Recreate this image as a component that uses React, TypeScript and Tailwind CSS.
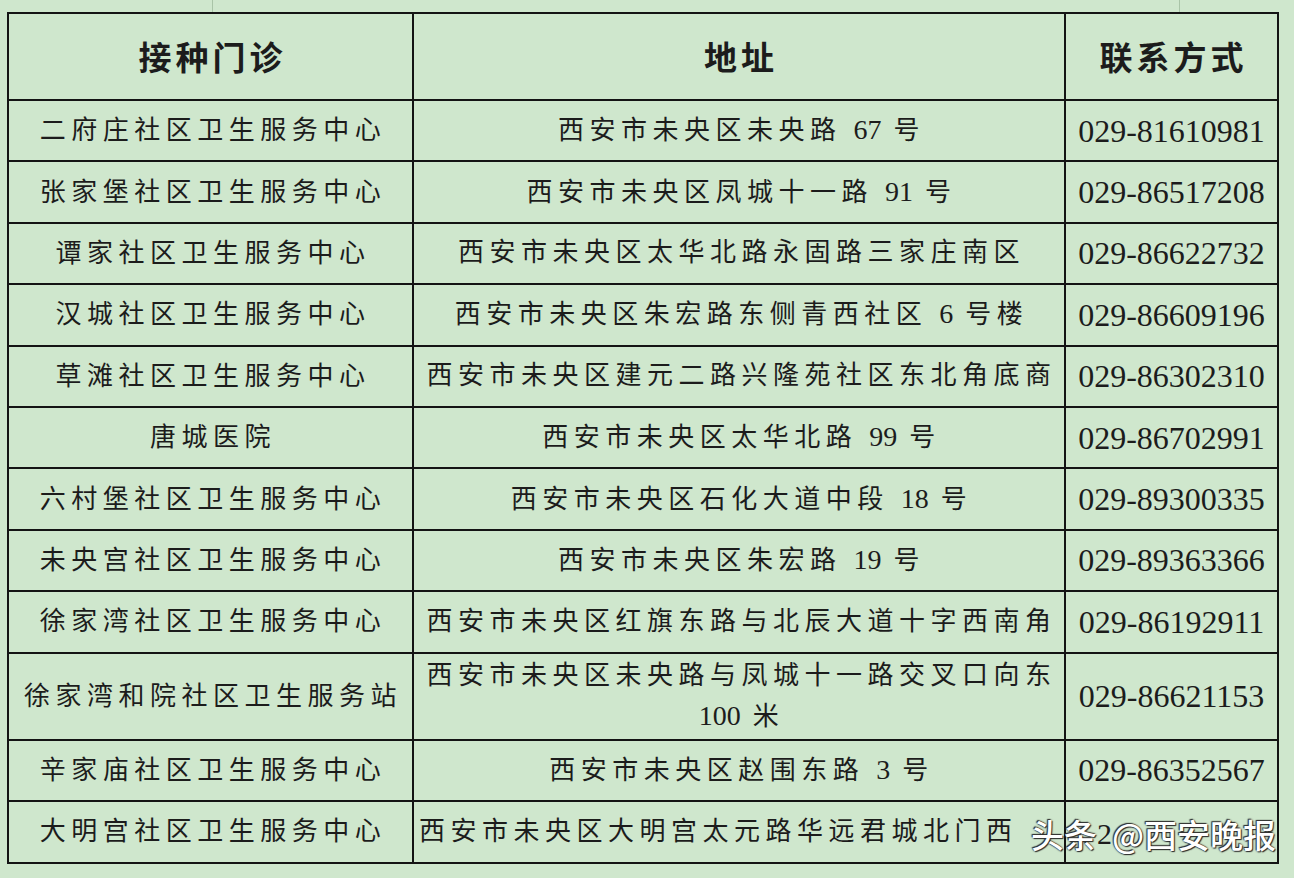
import React from "react"

type Row = {
  clinic: string
  address: string
  phone: string
  tall?: boolean
}

const rows: Row[] = [
  { clinic: "二府庄社区卫生服务中心", address: "西安市未央区未央路 67 号", phone: "029-81610981" },
  { clinic: "张家堡社区卫生服务中心", address: "西安市未央区凤城十一路 91 号", phone: "029-86517208" },
  { clinic: "谭家社区卫生服务中心", address: "西安市未央区太华北路永固路三家庄南区", phone: "029-86622732" },
  { clinic: "汉城社区卫生服务中心", address: "西安市未央区朱宏路东侧青西社区 6 号楼", phone: "029-86609196" },
  { clinic: "草滩社区卫生服务中心", address: "西安市未央区建元二路兴隆苑社区东北角底商", phone: "029-86302310" },
  { clinic: "唐城医院", address: "西安市未央区太华北路 99 号", phone: "029-86702991" },
  { clinic: "六村堡社区卫生服务中心", address: "西安市未央区石化大道中段 18 号", phone: "029-89300335" },
  { clinic: "未央宫社区卫生服务中心", address: "西安市未央区朱宏路 19 号", phone: "029-89363366" },
  { clinic: "徐家湾社区卫生服务中心", address: "西安市未央区红旗东路与北辰大道十字西南角", phone: "029-86192911" },
  {
    clinic: "徐家湾和院社区卫生服务站",
    address: "西安市未央区未央路与凤城十一路交叉口向东\n100 米",
    phone: "029-86621153",
    tall: true,
  },
  { clinic: "辛家庙社区卫生服务中心", address: "西安市未央区赵围东路 3 号", phone: "029-86352567" },
  { clinic: "大明宫社区卫生服务中心", address: "西安市未央区大明宫太元路华远君城北门西", phone: "" },
]

// digits in the addresses are set tight, the Chinese text is spaced out
function renderAddress(text: string) {
  return text.split("\n").map((line, li) => (
    <React.Fragment key={li}>
      {li > 0 && <br />}
      {line.split(/(\d+)/).map((part, pi) =>
        /^\d+$/.test(part) ? (
          <span key={pi} className="text-[28px] tracking-normal">
            {part}
          </span>
        ) : (
          <span key={pi}>{part}</span>
        )
      )}
    </React.Fragment>
  ))
}

const headerCell =
  "flex h-[87px] items-center justify-center border-b-2 border-[#141414] pl-[4px] text-[33px] font-bold tracking-[4px] font-['Noto_Sans_CJK_SC',serif]"

export default function App() {
  return (
    <div className="relative w-[1294px] h-[878px] overflow-hidden bg-[#cfe7cd] text-[#1c1c1c] font-['Liberation_Serif','Noto_Sans_CJK_SC',serif]">
      {/* spreadsheet gridlines above the table */}
      <div className="flex h-[12px]">
        <div className="w-[213px] border-r border-[#a9c4a7]" />
        <div className="w-[967px] border-r border-[#a9c4a7]" />
        <div className="flex-1" />
      </div>

      <div className="ml-[7px] w-[1272px] border-x-2 border-t-2 border-[#141414]">
        <div className="grid grid-cols-[405px_652px_211px]">
          <div className={`${headerCell} border-r-2`}>接种门诊</div>
          <div className={`${headerCell} border-r-2`}>地址</div>
          <div className={headerCell}>联系方式</div>

          {rows.map((r, i) => {
            const h = r.tall ? "h-[87px]" : i >= 10 ? "h-[61.5px]" : "h-[61.4px]"
            return (
              <React.Fragment key={i}>
                <div
                  className={`flex ${h} items-center justify-center whitespace-nowrap border-b-2 border-r-2 border-[#141414] pl-[5px] text-[26px] tracking-[5.5px]`}
                >
                  {r.clinic}
                </div>
                <div
                  className={`flex ${h} items-center whitespace-nowrap border-b-2 border-r-2 border-[#141414] pl-[5px] text-center text-[26px] leading-[40px] tracking-[5.5px] ${
                    i === 11 ? "justify-start" : "justify-center"
                  }`}
                >
                  <span>{renderAddress(r.address)}</span>
                </div>
                <div
                  className={`flex ${h} items-center justify-center whitespace-nowrap border-b-2 border-[#141414] text-[32px]`}
                >
                  {r.phone}
                </div>
              </React.Fragment>
            )
          })}
        </div>
      </div>

      {/* watermark */}
      <div className="absolute left-[1031px] top-[814px] flex items-center text-[33px] leading-[40px] font-medium text-white font-['Noto_Sans_CJK_SC',sans-serif] [text-shadow:0_0_2px_#2b2b2b,1px_1px_1px_#2b2b2b,-1px_-1px_1px_#2b2b2b]">
        <span>头条</span>
        <span className="font-['Liberation_Serif',serif] text-[30px] text-[#1c1c1c] [text-shadow:none]">2</span>
        <span>@西安晚报</span>
      </div>
    </div>
  )
}
